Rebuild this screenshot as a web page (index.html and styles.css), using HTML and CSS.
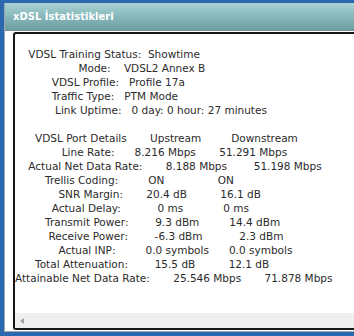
FILE: index.html
```html
<!DOCTYPE html>
<html lang="tr">
  <head>
    <meta charset="UTF-8" />
    <meta name="viewport" content="width=device-width, initial-scale=1.0" />
    <title>xDSL İstatistikleri</title>
    <link rel="stylesheet" href="styles.css">
  </head>
  <body>
    <div class="window">
      <div class="titlebar">xDSL İstatistikleri</div>
      <div class="panel">
        <div class="stats-box">
<pre class="stats">    VDSL Training Status:  Showtime
                   Mode:    VDSL2 Annex B
           VDSL Profile:   Profile 17a
           Traffic Type:   PTM Mode
            Link Uptime:   0 day: 0 hour: 27 minutes

      VDSL Port Details       Upstream         Downstream
              Line Rate:      8.216 Mbps       51.291 Mbps
    Actual Net Data Rate:       8.188 Mbps        51.198 Mbps
         Trellis Coding:         ON                ON
             SNR Margin:       20.4 dB          16.1 dB
           Actual Delay:           0 ms            0 ms
         Transmit Power:        9.3 dBm         14.4 dBm
          Receive Power:        -6.3 dBm           2.3 dBm
             Actual INP:         0.0 symbols      0.0 symbols
      Total Attenuation:        15.5 dB          12.1 dB
Attainable Net Data Rate:       25.546 Mbps       71.878 Mbps</pre>
          <div class="hscroll">
            <span class="arrow-left"></span>
          </div>
        </div>
      </div>
    </div>
  </body>
</html>
```

FILE: styles.css
```css
* {
  margin: 0;
  padding: 0;
  box-sizing: border-box;
}
body {
  background-color: #2c68ad;
  height: 336px;
  overflow: hidden;
  font-family: "DejaVu Sans", sans-serif;
}
.window {
  margin: 3px 0 0 4px;
  height: 329px;
  background-color: #fff;
  border-left: 1px solid #9aa9b0;
  border-bottom: 1px solid #9aa9b0;
}
.titlebar {
  height: 28px;
  padding-left: 8px;
  line-height: 27px;
  color: #fff;
  font-size: 10px;
  font-weight: bold;
  background: linear-gradient(#a9d1d2 0%, #8dbdc0 40%, #6c9da1 100%);
  border-bottom: 1px solid #7c8f92;
}
.panel {
  padding: 1px 0 0 8px;
}
.stats-box {
  height: 298px;
  border: 2px solid #151515;
  border-right: none;
  border-radius: 3px 0 0 3px;
  display: flex;
  flex-direction: column;
}
.stats {
  flex: 1;
  padding-top: 13px;
  font-family: "DejaVu Sans", sans-serif;
  font-size: 10.5px;
  line-height: 14px;
  color: #2b2b2b;
  white-space: pre;
}
.hscroll {
  height: 15px;
  background-color: #efefef;
  display: flex;
  align-items: center;
  padding-left: 5px;
}
.arrow-left {
  width: 0;
  height: 0;
  border-top: 3.5px solid transparent;
  border-bottom: 3.5px solid transparent;
  border-right: 4px solid #a3a3a3;
}
```
